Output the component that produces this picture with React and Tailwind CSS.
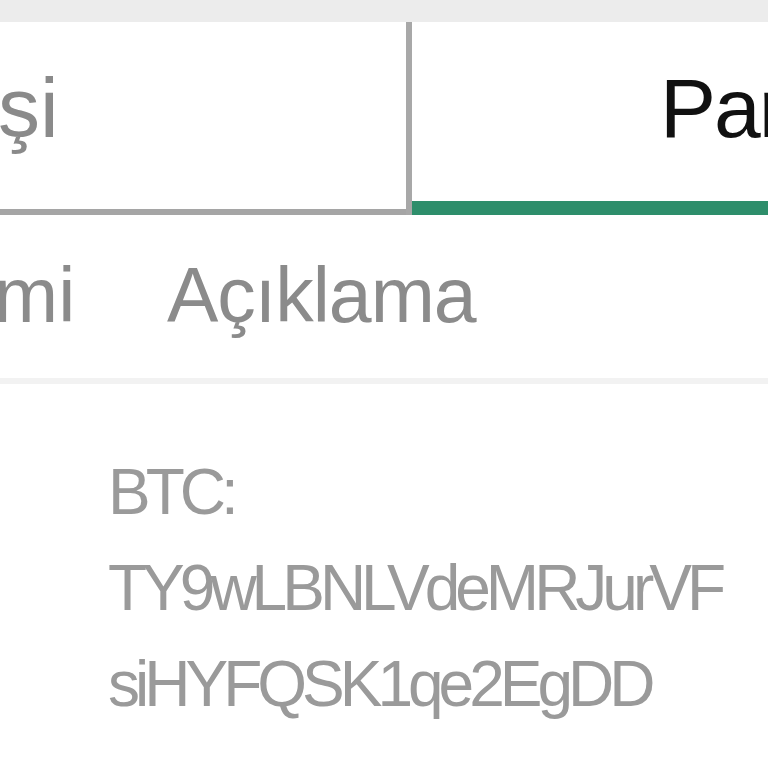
import React from 'react';

// Sekme başlıkları, tablo başlığı ve adres hücresi (yakınlaştırılmış görünüm)
function App() {
  return (
    <div className="w-[768px] h-[768px] overflow-hidden bg-white font-['Liberation_Sans',Arial,sans-serif]">
      {/* Üst şerit */}
      <div className="h-[22px] bg-[#ececec]" />

      {/* Sekmeler */}
      <div className="flex h-[193px]">
        <div className="w-[406px] shrink-0 border-b-[6px] border-[#a5a5a5] pt-[44px] overflow-hidden">
          <span className="block -ml-[2px] text-[84px] leading-none text-[#8a8a8a] whitespace-nowrap">şi</span>
        </div>
        <div className="w-[6px] shrink-0 bg-[#a8a8a8]" />
        <div className="flex-1 min-w-0 border-b-[14px] border-[#2e8e6b] pt-[44px] pl-[248px] overflow-hidden">
          <span className="block text-[84px] leading-none tracking-[-2px] text-[#111111] whitespace-nowrap">Para Çekme</span>
        </div>
      </div>

      {/* Tablo başlığı */}
      <div className="flex h-[169px] border-b-[6px] border-[#f2f2f2] pt-[42px] text-[77px] leading-none text-[#8b8b8b] whitespace-nowrap">
        <div className="w-[167px] shrink-0 overflow-hidden">
          <span className="block -ml-[6px]">mi</span>
        </div>
        <div className="tracking-[-1px]">Açıklama</div>
      </div>

      {/* Adres hücresi */}
      <div className="pt-[60px] pl-[108px] text-[64px] leading-[96px] tracking-[-5px] text-[#9a9a9a] whitespace-nowrap">
        <div>BTC:</div>
        <div>TY9wLBNLVdeMRJurVF</div>
        <div>siHYFQSK1qe2EgDD</div>
      </div>
    </div>
  );
}

export default App;
